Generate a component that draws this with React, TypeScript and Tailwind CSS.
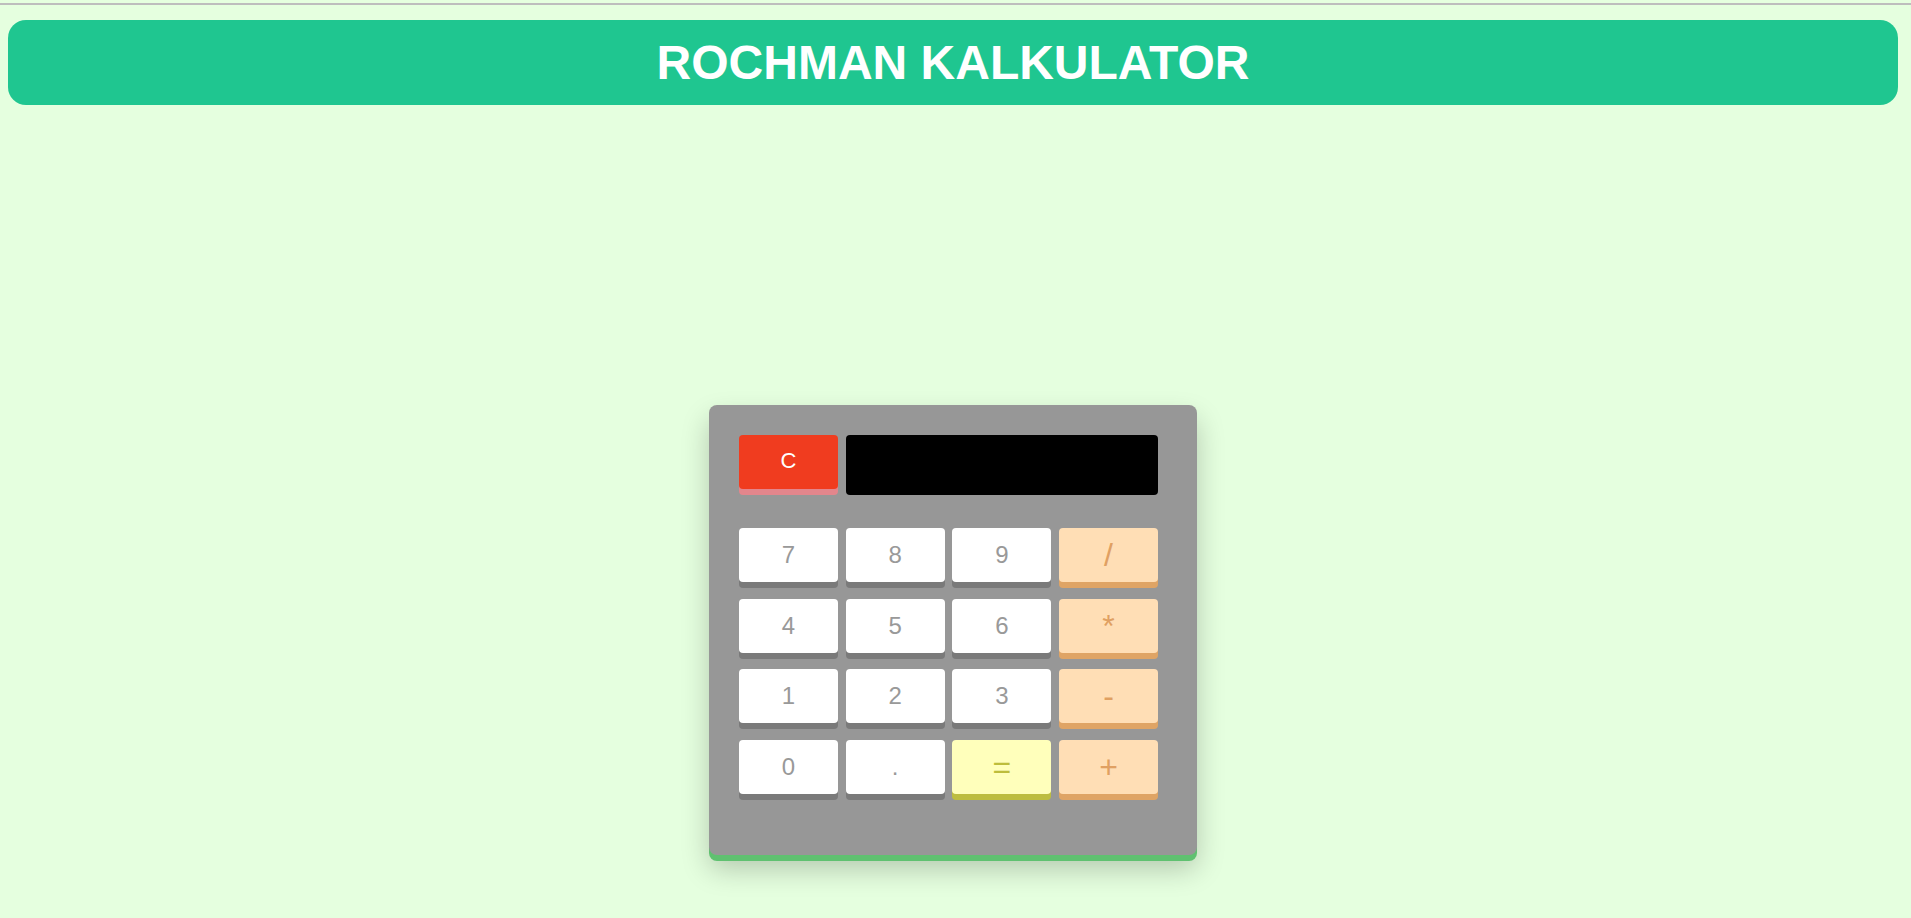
import React from "react";

type Btn = { label: string; kind: "num" | "op" | "eq" };

const rows: Btn[] = [
  { label: "7", kind: "num" },
  { label: "8", kind: "num" },
  { label: "9", kind: "num" },
  { label: "/", kind: "op" },
  { label: "4", kind: "num" },
  { label: "5", kind: "num" },
  { label: "6", kind: "num" },
  { label: "*", kind: "op" },
  { label: "1", kind: "num" },
  { label: "2", kind: "num" },
  { label: "3", kind: "num" },
  { label: "-", kind: "op" },
  { label: "0", kind: "num" },
  { label: ".", kind: "num" },
  { label: "=", kind: "eq" },
  { label: "+", kind: "op" },
];

const kindClass: Record<Btn["kind"], string> = {
  num: "bg-white text-[#999999] text-[24px] shadow-[0_6px_0_#7a7a7a]",
  op: "bg-[#ffdeb5] text-[#e0a062] text-[32px] shadow-[0_6px_0_#dfa465]",
  eq: "bg-[#ffffbb] text-[#bdbd3c] text-[32px] shadow-[0_6px_0_#bdbd40]",
};

export default function App() {
  return (
    <div
      className="w-[1911px] h-[918px] overflow-hidden bg-[#e5ffdf] flex flex-col"
      style={{ fontFamily: '"Liberation Sans", Arial, sans-serif' }}
    >
      <div className="mt-[3px] h-[2px] bg-[#bdbdbd]" />
      <div className="mt-[15px] ml-[8px] mr-[13px] h-[85px] rounded-[18px] bg-[#1fc690] flex items-center justify-center">
        <h1 className="text-[48px] font-bold text-white leading-none pt-[1px]">
          ROCHMAN KALKULATOR
        </h1>
      </div>
      <div className="mt-[300px] flex pl-[709px]">
        <div className="w-[488px] h-[450px] rounded-[8px] bg-[#979797] shadow-[0_6px_0_#5fc170,0_14px_28px_rgba(0,0,0,0.22)] pt-[30px] pl-[30px]">
          <div className="flex gap-[8px]">
            <button className="w-[99px] h-[54px] rounded-[4px] bg-[#f03c1f] text-white text-[22px] leading-none pb-[3px] shadow-[0_6px_0_#e3868c] flex items-center justify-center">
              C
            </button>
            <div className="w-[312px] h-[60px] rounded-[4px] bg-black" />
          </div>
          <div className="mt-[33px] grid grid-cols-[repeat(4,99px)] gap-x-[7.67px] gap-y-[16.67px]">
            {rows.map((b, i) => (
              <button
                key={i}
                className={`h-[54px] rounded-[4px] leading-none flex items-center justify-center ${kindClass[b.kind]}`}
              >
                {b.label}
              </button>
            ))}
          </div>
        </div>
      </div>
    </div>
  );
}
